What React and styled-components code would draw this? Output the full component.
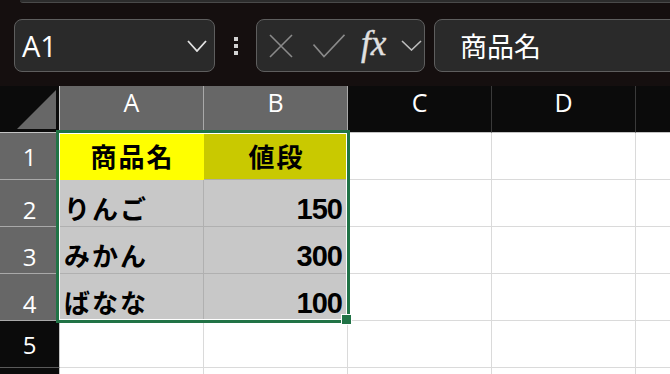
import styled, { createGlobalStyle } from 'styled-components'

const GlobalStyle = createGlobalStyle`
  html, body {
    margin: 0;
    padding: 0;
    background: #150f0f;
    overflow: hidden;
  }
  body {
    font-family: "Noto Sans CJK JP", "Noto Sans", sans-serif;
  }
`

const Page = styled.div`
  width: 670px;
  height: 374px;
  overflow: hidden;
  background: #150f0f;
`

const Ribbon = styled.div`
  height: 2px;
  margin-left: 20px;
  background: #2c2c2c;
  border-bottom: 1px solid #4a4a4a;
  border-bottom-left-radius: 6px;
`

const Toolbar = styled.div`
  height: 83px;
  box-sizing: border-box;
  display: flex;
  align-items: flex-start;
  padding: 16px 0 0 14px;
`

const Box = styled.div`
  height: 53px;
  box-sizing: border-box;
  flex-shrink: 0;
  display: flex;
  align-items: center;
  background: #2a2a2a;
  border: 1px solid #5e5e5e;
  border-radius: 8px;
`

const NameBox = styled(Box)`
  width: 201px;
  padding: 0 7px 0 7px;
  justify-content: space-between;
  color: #ffffff;
  font-family: "Open Sans", sans-serif;
  font-size: 29px;
  line-height: 1;
`

const Dots = styled.div`
  width: 4px;
  height: 53px;
  margin-left: 19px;
  display: flex;
  flex-direction: column;
  justify-content: center;
  gap: 3px;
`

const Dot = styled.span`
  display: block;
  width: 4px;
  height: 4px;
  background: #d2d2d2;
`

const FuncBox = styled(Box)`
  width: 169px;
  margin-left: 18px;
  padding-left: 12px;
`

const Slot = styled.span`
  display: flex;
  align-items: center;
  margin-left: ${p => p.$gap || 0}px;
`

const Fx = styled.span`
  font-family: "Liberation Serif", serif;
  font-style: italic;
  font-weight: 400;
  font-size: 35px;
  line-height: 1;
  color: #e0e0e0;
  width: 32px;
  margin-left: 16px;
  margin-top: -4px;
  -webkit-text-stroke: 0.4px #e0e0e0;
`

const FormulaBar = styled(Box)`
  width: 270px;
  margin-left: 9px;
  padding-left: 25px;
  color: #ffffff;
  font-size: 27px;
  font-weight: 400;
  line-height: 1;
`

const Sheet = styled.div`
  position: relative;
  display: grid;
  grid-template-columns: 60px repeat(5, 144px);
  grid-template-rows: repeat(7, 47px);
  background: #ffffff;
`

const Corner = styled.div`
  background: #0b0b0b;
  border-right: 1px solid #c4c4c4;
  border-bottom: 1px solid #c4c4c4;
  box-sizing: border-box;
`

const Head = styled.div`
  box-sizing: border-box;
  display: flex;
  justify-content: center;
  align-items: center;
  background: ${p => (p.$on ? '#676767' : '#0b0b0b')};
  color: #ffffff;
  font-family: "Open Sans", sans-serif;
  line-height: 1;
`

const ColHead = styled(Head)`
  font-size: 25px;
  padding-bottom: 13px;
  border-right: 1px solid ${p => (p.$on ? '#a9a9a9' : '#3a3a3a')};
  border-bottom: 1px solid #c4c4c4;
`

const RowHead = styled(Head)`
  font-size: 24px;
  padding-top: ${p => (p.$drop ? 14 : 2)}px;
  border-right: 1px solid #c4c4c4;
  border-bottom: 1px solid ${p => (p.$on ? '#a9a9a9' : '#5a5a5a')};
`

const Cell = styled.div`
  box-sizing: border-box;
  display: flex;
  align-items: ${p => (p.$head ? 'center' : 'flex-end')};
  justify-content: ${p =>
    p.$align === 'right' ? 'flex-end' : p.$align === 'center' ? 'center' : 'flex-start'};
  padding: ${p => (p.$head ? '0 0 0 2px' : '0 5px 5px 4px')};
  background: ${p => p.$bg || '#ffffff'};
  border-right: 1px solid ${p => p.$line || '#dadada'};
  border-bottom: 1px solid ${p => p.$line || '#dadada'};
  color: #000000;
  font-size: 26px;
  font-weight: 700;
  letter-spacing: 2px;
  line-height: 1;
`

const Num = styled.span`
  font-family: "Liberation Sans", Arial, sans-serif;
  font-size: 29px;
  font-weight: 700;
  letter-spacing: -1px;
  margin-bottom: -3px;
`

const Selection = styled.div`
  position: absolute;
  left: 56px;
  top: 44px;
  width: 294px;
  height: 193px;
  box-sizing: border-box;
  border: 3px solid #217346;
  box-shadow: inset 0 0 0 1px #ffffff;
  pointer-events: none;
`

const Handle = styled.div`
  position: absolute;
  left: 342px;
  top: 229px;
  width: 9px;
  height: 9px;
  background: #217346;
  box-shadow: 0 0 0 1px #ffffff;
`

const Chevron = ({ w, h, color, sw }) => (
  <svg width={w} height={h} viewBox={`0 0 ${w} ${h}`}>
    <polyline
      points={`1,1 ${w / 2},${h - 1} ${w - 1},1`}
      fill="none"
      stroke={color}
      strokeWidth={sw}
    />
  </svg>
)

const rows = [
  { n: 1, a: '商品名', b: '値段', head: true },
  { n: 2, a: 'りんご', b: '150' },
  { n: 3, a: 'みかん', b: '300' },
  { n: 4, a: 'ばなな', b: '100' },
]

const App = () => {
  return (
    <Page>
      <GlobalStyle />
      <Ribbon />
      <Toolbar>
        <NameBox>
          <span>A1</span>
          <Chevron w={20} h={12} color="#e2e2e2" sw={1.8} />
        </NameBox>
        <Dots>
          <Dot />
          <Dot />
          <Dot />
        </Dots>
        <FuncBox>
          <Slot>
            <svg width="24" height="24" viewBox="0 0 24 24">
              <path d="M1 1 L23 23 M23 1 L1 23" stroke="#8a8a8a" strokeWidth="1.6" fill="none" />
            </svg>
          </Slot>
          <Slot $gap={20}>
            <svg width="32" height="24" viewBox="0 0 32 24">
              <polyline points="0.5,10.5 11,22.5 31.5,0.8" stroke="#8a8a8a" strokeWidth="1.6" fill="none" />
            </svg>
          </Slot>
          <Fx>fx</Fx>
          <Slot $gap={8}>
            <Chevron w={21} h={11} color="#bdbdbd" sw={1.6} />
          </Slot>
        </FuncBox>
        <FormulaBar>商品名</FormulaBar>
      </Toolbar>

      <Sheet>
        <Corner>
          <svg width="59" height="46" viewBox="0 0 59 46">
            <polygon points="17,43 56,43 56,4" fill="#676767" />
          </svg>
        </Corner>
        {['A', 'B', 'C', 'D', 'E'].map((c, i) => (
          <ColHead key={c} $on={i < 2}>
            {c === 'E' ? '' : c}
          </ColHead>
        ))}

        {rows.map(r => (
          <Row key={r.n} r={r} />
        ))}

        <BlankRow label="5" />
        <BlankRow label="" />

        <Selection />
        <Handle />
      </Sheet>
    </Page>
  )
}

const Row = ({ r }) => (
  <>
    <RowHead $on $drop={!r.head}>{r.n}</RowHead>
    {r.head ? (
      <>
        <Cell $head $align="center" $bg="#ffff00" $line="#ffff00">{r.a}</Cell>
        <Cell $head $align="center" $bg="#c9c900" $line="#b0b0a0">{r.b}</Cell>
      </>
    ) : (
      <>
        <Cell $bg="#c8c8c8" $line="#b0b0b0">{r.a}</Cell>
        <Cell $align="right" $bg="#c8c8c8" $line="#b0b0b0">
          <Num>{r.b}</Num>
        </Cell>
      </>
    )}
    <Cell />
    <Cell />
    <Cell />
  </>
)

const BlankRow = ({ label }) => (
  <>
    <RowHead>{label}</RowHead>
    <Cell />
    <Cell />
    <Cell />
    <Cell />
    <Cell />
  </>
)

export default App
